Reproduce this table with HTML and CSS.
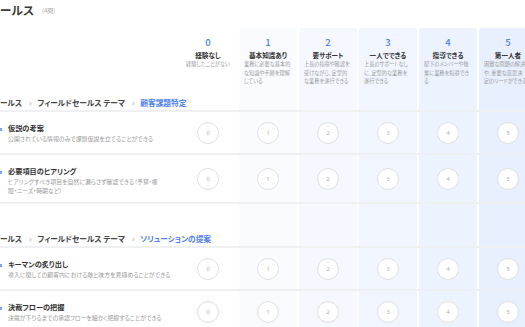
FILE: index.html
```html
<!DOCTYPE html>
<html lang="ja">
<head>
<meta charset="utf-8">
<link rel="stylesheet" href="styles.css">
</head>
<body>
<div class="page">
  <div class="title-bar"><h1 class="title">ールス</h1><span class="count">(4問)</span></div>

  <div class="grid-row head-row">
    <div class="lead"></div>
    <div class="col c0"><div class="lv">0</div><div class="lv-name">経験なし</div><div class="lv-desc single">経験したことがない</div></div>
    <div class="col c1"><div class="lv">1</div><div class="lv-name">基本知識あり</div><div class="lv-desc">業務に必要な基本的<br>な知識や手順を理解<br>している</div></div>
    <div class="col c2"><div class="lv">2</div><div class="lv-name">要サポート</div><div class="lv-desc">上長の指導や確認を<br>受けながら、定型的<br>な業務を遂行できる</div></div>
    <div class="col c3"><div class="lv">3</div><div class="lv-name">一人でできる</div><div class="lv-desc">上長のサポートなし<br>に、定型的な業務を<br>遂行できる</div></div>
    <div class="col c4"><div class="lv">4</div><div class="lv-name">指導できる</div><div class="lv-desc">配下のメンバーや後<br>輩に業務を指導でき<br>る</div></div>
    <div class="col c5"><div class="lv">5</div><div class="lv-name">第一人者</div><div class="lv-desc">困難な問題の解決<br>や、重要な意思決<br>定のリードができる</div></div>
  </div>

  <div class="grid-row crumb-row">
    <div class="lead crumb">ールス<span class="sep">›</span>フィールドセールス テーマ<span class="sep">›</span><span class="cur">顧客課題特定</span></div>
    <div class="col c1"></div><div class="col c2"></div><div class="col c3"></div><div class="col c4"></div><div class="col c5"></div>
  </div>

  <div class="grid-row item-row">
    <div class="lead item"><div class="item-title">仮説の考案</div><div class="item-desc">公開されている情報のみで課題仮説を立てることができる</div></div>
    <div class="col c0"><span class="dot">0</span></div><div class="col c1"><span class="dot">1</span></div><div class="col c2"><span class="dot">2</span></div><div class="col c3"><span class="dot">3</span></div><div class="col c4"><span class="dot">4</span></div><div class="col c5"><span class="dot">5</span></div>
  </div>

  <div class="grid-row item-row">
    <div class="lead item"><div class="item-title">必要項目のヒアリング</div><div class="item-desc">ヒアリングすべき項目を自然に漏らさず確認できる（予算・権<br>限・ニーズ・時期など）</div></div>
    <div class="col c0"><span class="dot">0</span></div><div class="col c1"><span class="dot">1</span></div><div class="col c2"><span class="dot">2</span></div><div class="col c3"><span class="dot">3</span></div><div class="col c4"><span class="dot">4</span></div><div class="col c5"><span class="dot">5</span></div>
  </div>

  <div class="grid-row crumb-row crumb-row-next">
    <div class="lead crumb">ールス<span class="sep">›</span>フィールドセールス テーマ<span class="sep">›</span><span class="cur">ソリューションの提案</span></div>
    <div class="col c1"></div><div class="col c2"></div><div class="col c3"></div><div class="col c4"></div><div class="col c5"></div>
  </div>

  <div class="grid-row item-row">
    <div class="lead item"><div class="item-title">キーマンの炙り出し</div><div class="item-desc">導入に関しての顧客内における敵と味方を見極めることができる</div></div>
    <div class="col c0"><span class="dot">0</span></div><div class="col c1"><span class="dot">1</span></div><div class="col c2"><span class="dot">2</span></div><div class="col c3"><span class="dot">3</span></div><div class="col c4"><span class="dot">4</span></div><div class="col c5"><span class="dot">5</span></div>
  </div>

  <div class="grid-row item-row">
    <div class="lead item"><div class="item-title">決裁フローの把握</div><div class="item-desc">決裁が下りるまでの承認フローを細かく把握することができる</div></div>
    <div class="col c0"><span class="dot">0</span></div><div class="col c1"><span class="dot">1</span></div><div class="col c2"><span class="dot">2</span></div><div class="col c3"><span class="dot">3</span></div><div class="col c4"><span class="dot">4</span></div><div class="col c5"><span class="dot">5</span></div>
  </div>
</div>
</body>
</html>
```

FILE: styles.css
```css
html, body {
  margin: 0;
  padding: 0;
  background: #ffffff;
  overflow: hidden;
}
body {
  width: 525px;
  height: 327px;
  font-family: "Noto Sans CJK JP", "Noto Sans", sans-serif;
  font-feature-settings: "palt";
  color: #333;
}
.page {
  display: flex;
  flex-direction: column;
  width: 537px;
}
.title-bar {
  height: 28px;
  display: flex;
  align-items: flex-start;
  padding-top: 2px;
  box-sizing: border-box;
}
.title {
  margin: 0;
  font-size: 11.8px;
  line-height: 16px;
  font-weight: 700;
  color: #3a3a3a;
}
.count {
  margin-left: 8px;
  font-size: 6px;
  line-height: 17px;
  color: #aaa;
}
.grid-row {
  display: grid;
  grid-template-columns: 177px repeat(6, 58px);
  column-gap: 2px;
}
.col { background: #fff; }
.c0 { background: #ffffff; }
.c1 { background: #f9fbff; }
.c2 { background: #f5f8ff; }
.c3 { background: #f0f5ff; }
.c4 { background: #ecf2fe; }
.c5 { background: #e8effe; }

.head-row { height: 60px; }
.head-row .col {
  border-radius: 3px 3px 0 0;
  padding: 8px 5px 0;
  text-align: center;
}
.lv {
  font-size: 9.5px;
  line-height: 12px;
  color: #4f81f3;
  font-weight: 500;
}
.lv-name {
  margin-top: 2px;
  font-size: 6.6px;
  line-height: 10px;
  font-weight: 700;
  color: #333;
  white-space: nowrap;
}
.lv-desc {
  font-size: 5.2px;
  line-height: 8.5px;
  color: #9a9a9a;
  text-align: left;
  white-space: nowrap;
}
.lv-desc.single { text-align: center; }

.crumb-row {
  height: 22px;
  border-bottom: 2px solid #eff0f2;
}
.crumb-row-next { height: 42px; }
.crumb {
  grid-column: 1 / 3;
  align-self: end;
  padding-bottom: 2px;
  font-size: 7.7px;
  line-height: 10px;
  font-weight: 700;
  color: #444;
  white-space: nowrap;
}
.sep {
  color: #999;
  font-weight: 400;
  margin: 0 6px 0 7px;
}
.cur { color: #4f81f3; }

.item-row {
  min-height: 41px;
  border-bottom: 2px solid #eff0f2;
}
.item {
  padding: 11px 12px 7px 0;
}
.item-title {
  font-size: 7.2px;
  line-height: 10px;
  font-weight: 700;
  color: #333;
  white-space: nowrap;
}
.item-title::before {
  content: "";
  display: inline-block;
  width: 1.5px;
  height: 3px;
  margin-right: 6.5px;
  background: #7aa3f5;
  vertical-align: middle;
}
.item-desc {
  margin-top: 2px;
  padding-left: 8px;
  font-size: 5.9px;
  line-height: 8.5px;
  color: #9a9a9a;
  white-space: nowrap;
}
.item-row .col {
  display: flex;
  align-items: center;
  justify-content: center;
}
.dot {
  width: 20px;
  height: 20px;
  border: 1px solid #e0e0e2;
  border-radius: 50%;
  background: #fff;
  display: flex;
  align-items: center;
  justify-content: center;
  font-size: 5.5px;
  color: #aaa;
  font-family: "Noto Sans", sans-serif;
}
```
